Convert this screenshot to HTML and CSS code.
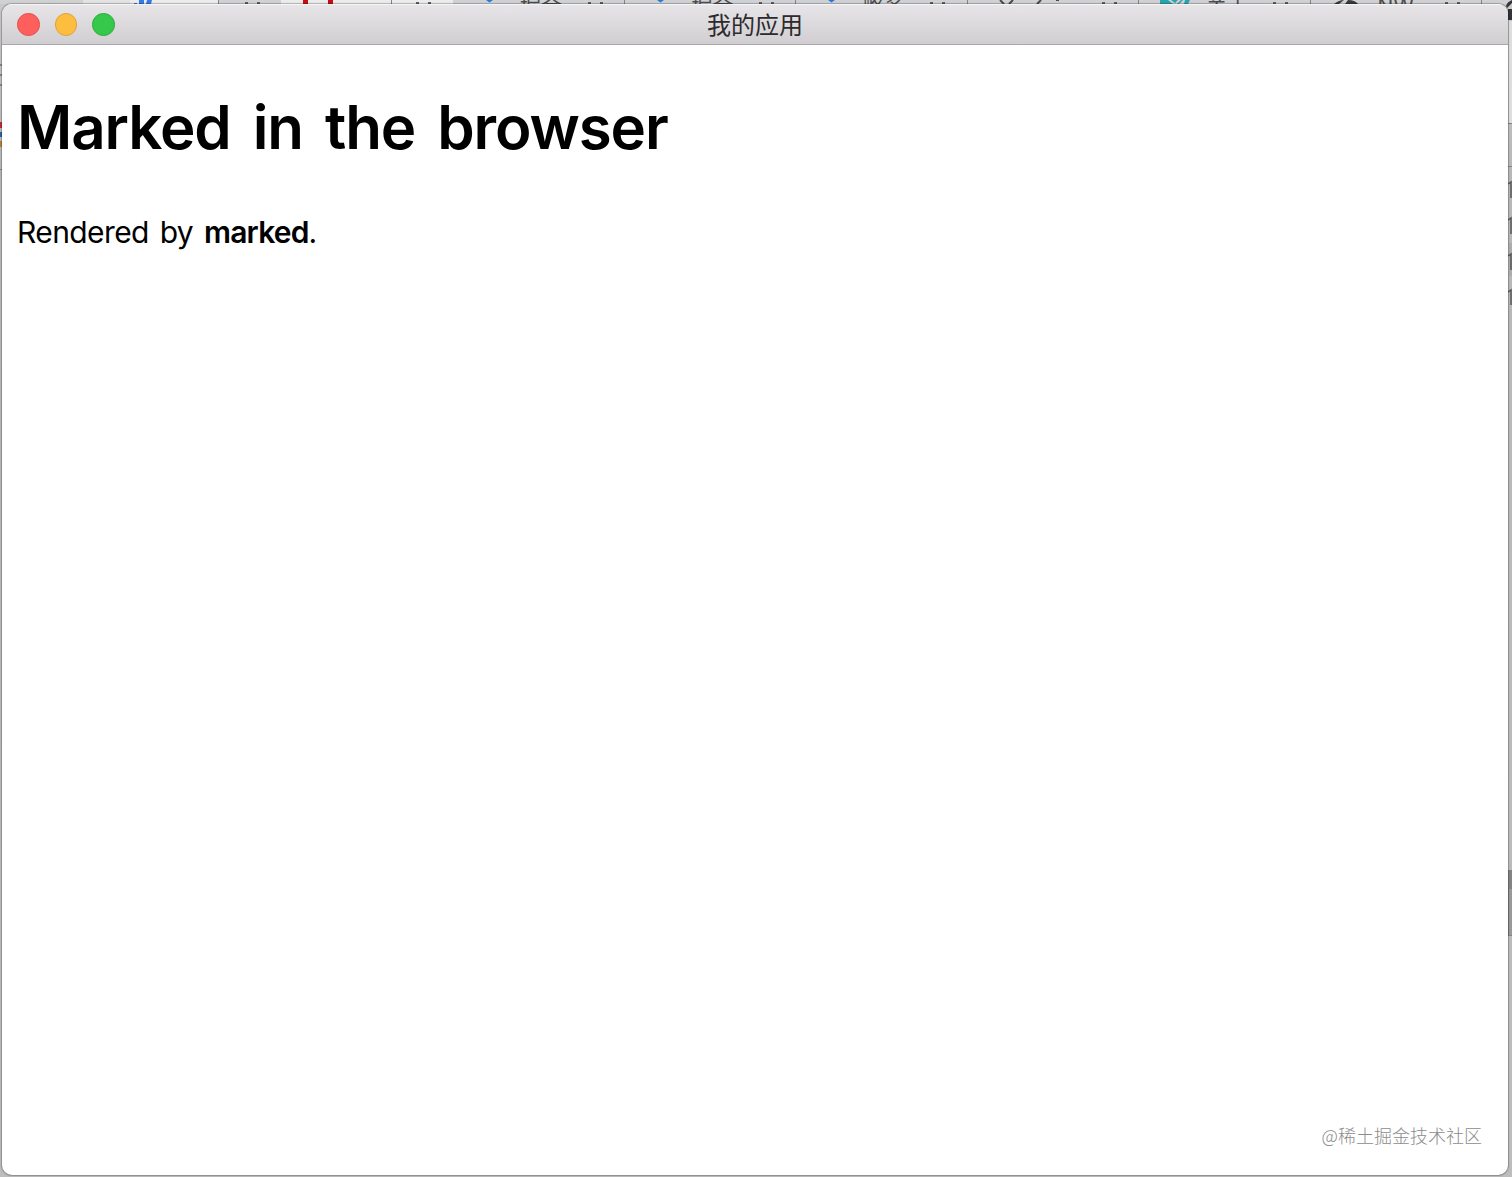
FILE: index.html
```
<!DOCTYPE html>
<html lang="zh-CN">
<head>
    <meta charset="utf-8">
    <title>我的应用</title>
    <link rel="stylesheet" href="styles.css">
</head>
<body>
    <div class="desktop">
        <div class="tabs">
            <svg class="marks" width="1512" height="4" viewBox="0 0 1512 4">
                <path fill="#d2d2d2" d="M22 0h22v4H22zM60 0h23v4H60z"/>
                <path fill="#e3e3e3" d="M83 0h47v4H83z"/>
                <path fill="#ececec" d="M130 0h88v4h-88zM281 0h172v4H281z"/>
                <path fill="#347be8" d="M139 0h5v4h-5zM147 0h5l-1 4h-5zM134 3h3v1h-3z"/>
                <path fill="#c90a18" d="M303 0h5v4h-5zM328 0h5v4h-5z"/>
                <path fill="#2878df" d="M486 0h7l-3.500 2.500zM657 0h7l-3.500 2.500zM828 0h7l-3.500 2.500z"/>
                <path fill="#28a5ac" d="M1160 0h8l5 4h-13zM1171 0h7l-3 3zM1181 0h2l-4 4h-2zM1185 0h5l-2 4h-4z"/>
                <path fill="#3b3b3d" d="M1334 4q5-4 10-4l-5 4zM1345 4l3-4q7 0 10 4z"/>
                <path fill="none" stroke="#4b4b4d" stroke-width="2" d="M1000 0l4 4M1013 0l-4 4M1041 0l-4 4M1056 0h3"/>
                <path fill="#858587" d="M218 0h1v4h-1zM391 0h1v4h-1zM624 0h1v4h-1zM795 0h1v4h-1zM967 0h1v4h-1zM1138 0h1v4h-1zM1310 0h1v4h-1zM1481 0h1v4h-1z"/>
                <path fill="#606062" d="M245 2h3v2h-3zM257 2h3v2h-3zM416 2h3v2h-3zM428 2h3v2h-3zM588 2h3v2h-3zM600 2h3v2h-3zM759 2h3v2h-3zM771 2h3v2h-3zM930 2h3v2h-3zM942 2h3v2h-3zM1102 2h3v2h-3zM1114 2h3v2h-3zM1273 2h3v2h-3zM1285 2h3v2h-3zM1445 2h3v2h-3zM1457 2h3v2h-3z"/>
            </svg>
            <div class="tab">掘金</div>
            <div class="tab">掘金</div>
            <div class="tab">略多</div>
            <div class="tab"></div>
            <div class="tab">关于</div>
            <div class="tab">NW</div>
        </div>
        <svg class="edge" width="2" height="1177" viewBox="0 0 2 1177">
            <path fill="#888" d="M0 64h2v2H0zM0 74h2v2H0zM0 84h2v2H0zM0 169h2v1H0z"/>
            <path fill="#c52c35" d="M0 122h2v6H0z"/>
            <path fill="#2b62ad" d="M0 132h2v5H0z"/>
            <path fill="#bf8038" d="M0 141h2v6H0z"/>
        </svg>
        <svg class="edge edge-right" width="6" height="1177" viewBox="0 0 6 1177">
            <path fill="#343438" d="M6 0Q1 2 0 6l1 2 5-5zM2 9h4v11H2z"/>
            <path fill="#dedede" d="M3 21h3v102H3z"/>
            <path fill="#838383" d="M2 123h4v1H2zM2 166h4v1H2zM2 870h4v66H2z"/>
            <path fill="#adadad" d="M3 243h3v33H3z"/>
            <path fill="#999" d="M3 889h3v46H3z"/>
            <path fill="none" stroke="#555" stroke-width="1.500" d="M2 184l3-2v16M2 220l3-2v16M2 256l3-2v16M2 292l3-2v15"/>
        </svg>
        <div class="window">
            <div class="titlebar">
                <div class="buttons">
                    <span class="btn close"></span>
                    <span class="btn minimize"></span>
                    <span class="btn maximize"></span>
                </div>
                <div class="title">我的应用</div>
            </div>
            <div id="content" class="content">
                <h1>Marked in the browser</h1>
                <p>Rendered by <strong>marked</strong>.</p>
            </div>
            <div class="watermark">@稀土掘金技术社区</div>
        </div>
    </div>
</body>
</html>
```

FILE: styles.css
```
body {
    margin: 0;
    overflow: hidden;
    font-family: Inter, "Noto Sans CJK SC", sans-serif;
}
.desktop {
    position: relative;
    box-sizing: border-box;
    height: 1177px;
    padding: 4px 4px 2px 2px;
    background: linear-gradient(#c9c9c9, #b8b8b8 15%, #bdbdbd);
    overflow: hidden;
}
/* strip of browser tabs showing behind the window */
.tabs {
    position: absolute;
    top: 0;
    left: 0;
    display: flex;
    box-sizing: border-box;
    width: 1512px;
    height: 4px;
    padding-left: 453px;
    background-color: #d0d1d4;
    overflow: hidden;
}
.marks {
    position: absolute;
    top: 0;
    left: 0;
}
.tab {
    box-sizing: border-box;
    flex: 0 0 171.5px;
    padding-left: 67px;
    margin-top: -6px;
    color: #4c4c4e;
    font-size: 21px;
    line-height: 26px;
}
.edge {
    position: absolute;
    top: 0;
    left: 0;
}
.edge-right {
    left: auto;
    right: 0;
}
.window {
    position: relative;
    display: flex;
    flex-direction: column;
    height: 1171px;
    border-radius: 10px;
    background-color: #fff;
    box-shadow: 0 0 1px 1px rgba(0, 0, 0, 0.25);
    overflow: hidden;
}
.titlebar {
    display: grid;
    grid-template-columns: 1fr auto 1fr;
    align-items: center;
    box-sizing: border-box;
    height: 41px;
    padding: 0 15px;
    border-top: 1px solid #f5f5f5;
    border-bottom: 1px solid #aaa8aa;
    background: linear-gradient(#e7e5e8, #d0ced0);
}
.buttons {
    display: flex;
    gap: 15px;
}
.btn {
    box-sizing: border-box;
    width: 22.6px;
    height: 22.6px;
    border: 1px solid #e2504b;
    border-radius: 50%;
    background-color: #fd605c;
}
.minimize {
    border-color: #dfa138;
    background-color: #fdbe40;
}
.maximize {
    border-color: #2bac3c;
    background-color: #35c84a;
}
.title {
    padding-bottom: 2px;
    color: #2c2a2c;
    font-family: "Noto Sans CJK SC", sans-serif;
    font-size: 24px;
    line-height: 36px;
}
.content {
    flex: 1;
    padding: 0 15px;
    color: #000;
}
.content h1 {
    margin: 44px 0 0;
    font-size: 60px;
    font-weight: 600;
    line-height: 76px;
    letter-spacing: -1.1px;
    word-spacing: 8px;
}
.content p {
    margin: 47px 0 0;
    font-size: 30px;
    line-height: 40px;
    letter-spacing: -0.6px;
    word-spacing: 3px;
}
.content strong {
    font-weight: 600;
    letter-spacing: -0.8px;
}
.watermark {
    padding: 0 26px 26px;
    color: #8c8c8c;
    font-family: "Noto Sans CJK SC", sans-serif;
    font-size: 18px;
    font-weight: 300;
    line-height: 27px;
    text-align: right;
}
```
